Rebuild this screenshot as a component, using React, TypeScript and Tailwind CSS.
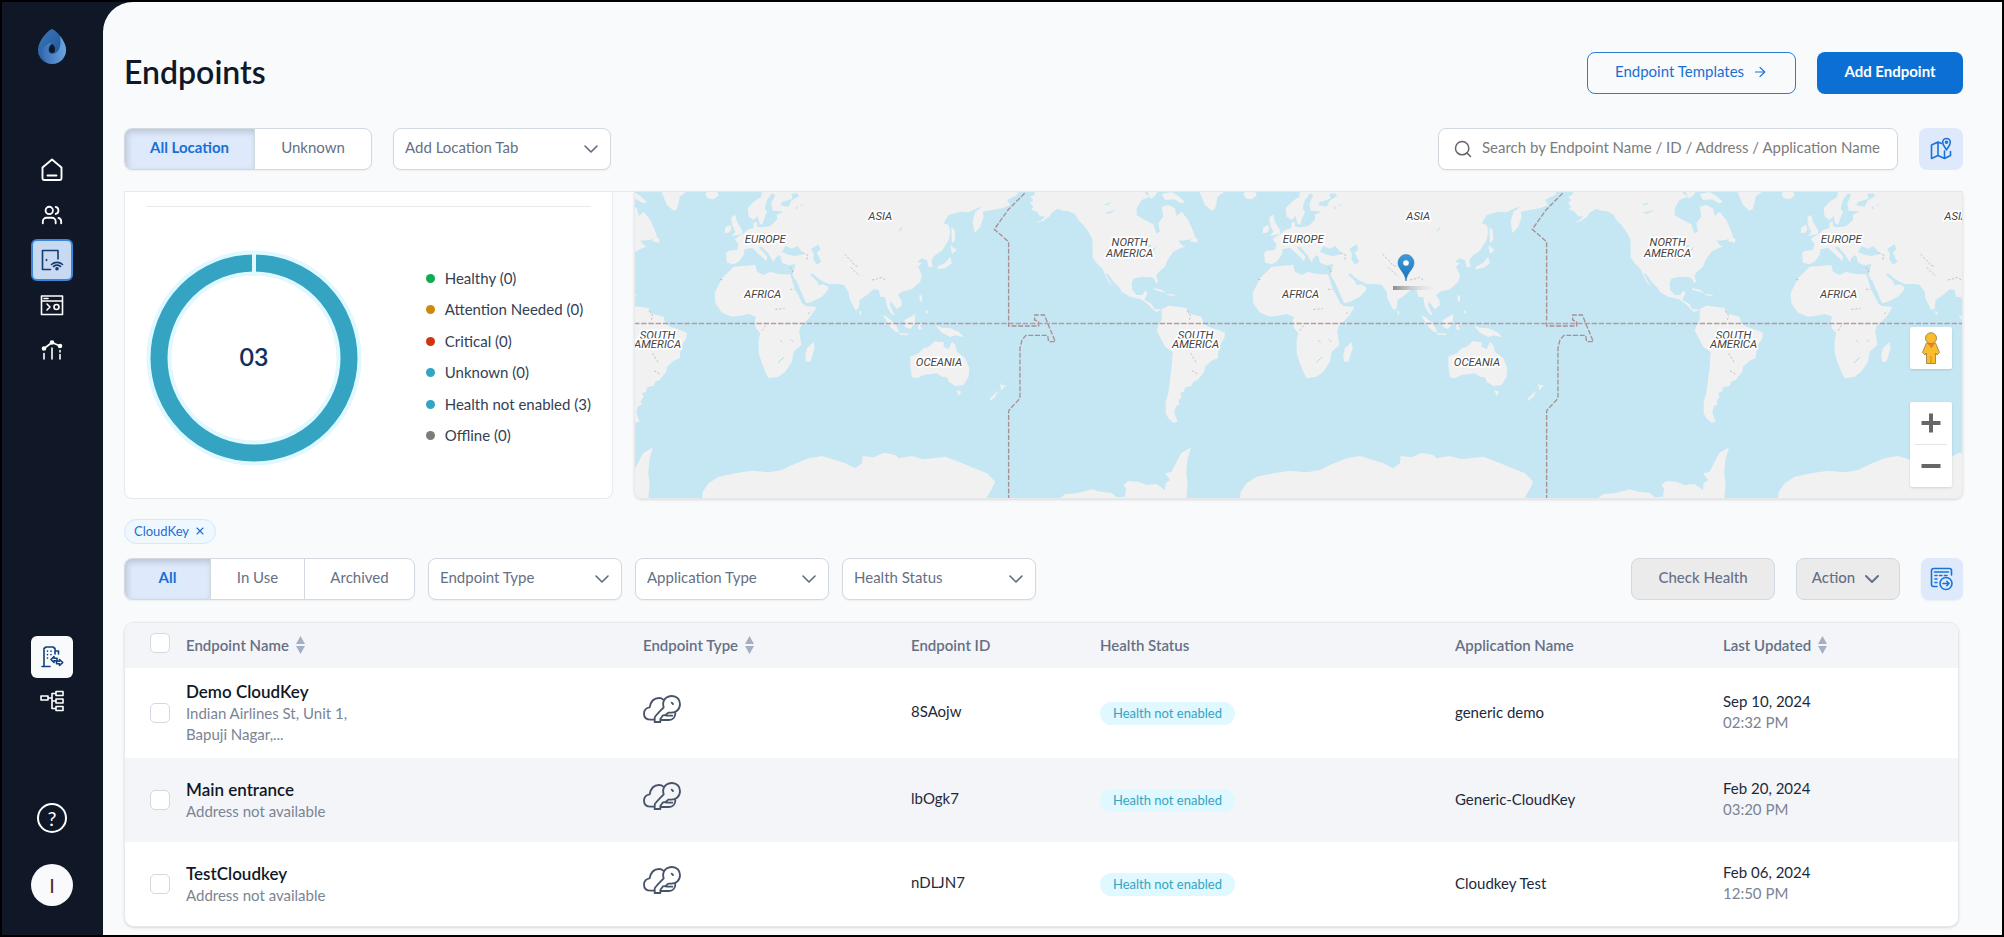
import type { ReactNode } from "react";
import { ArrowRight, ChevronDown, Search, Users, X } from "lucide-react";

const healthStats = [
  { label: "Healthy", count: 0, dot: "bg-[#0cad52]" },
  { label: "Attention Needed", count: 0, dot: "bg-[#cd8a0a]" },
  { label: "Critical", count: 0, dot: "bg-[#d1350d]" },
  { label: "Unknown", count: 0, dot: "bg-[#35a4c2]" },
  { label: "Health not enabled", count: 3, dot: "bg-[#35a4c2]" },
  { label: "Offline", count: 0, dot: "bg-[#7c7c7c]" },
];

const endpoints = [
  {
    name: "Demo CloudKey",
    address: "Indian Airlines St, Unit 1, Bapuji Nagar,...",
    id: "8SAojw",
    health: "Health not enabled",
    application: "generic demo",
    date: "Sep 10, 2024",
    time: "02:32 PM",
  },
  {
    name: "Main entrance",
    address: "Address not available",
    id: "lbOgk7",
    health: "Health not enabled",
    application: "Generic-CloudKey",
    date: "Feb 20, 2024",
    time: "03:20 PM",
  },
  {
    name: "TestCloudkey",
    address: "Address not available",
    id: "nDLJN7",
    health: "Health not enabled",
    application: "Cloudkey Test",
    date: "Feb 06, 2024",
    time: "12:50 PM",
  },
];

const columns = [
  { label: "Endpoint Name", sortable: true },
  { label: "Endpoint Type", sortable: true },
  { label: "Endpoint ID", sortable: false },
  { label: "Health Status", sortable: false },
  { label: "Application Name", sortable: false },
  { label: "Last Updated", sortable: true },
];

// Map shapes, one copy of the world
const americas = [
  "M40 35L38 45 25 50 35 60 25 70 35 80 28 88 45 95 55 108 70 110 60 120 42 130 65 122 85 108 90 98 108 87 125 92 140 93 160 103 172 122 185 135 200 155 212 178 213 215 212 230 225 250 243 268 250 285 262 308 275 320 265 305 255 288 250 278 262 285 278 308 295 325 300 335 325 350 345 355 358 358 378 372 390 385 403 396 420 390 412 388 398 388 390 372 380 366 368 360 372 350 378 338 370 332 362 345 345 345 332 330 330 310 335 296 360 290 390 292 398 298 403 310 410 305 404 288 412 275 430 260 438 240 455 215 475 205 490 200 480 195 470 182 500 180 520 168 515 155 500 120 480 95 465 108 460 85 440 75 420 80 425 110 410 130 415 155 404 160 395 133 370 120 345 105 345 85 360 60 385 50 370 40 370 35Z",
  "M512 165L528 178 526 188 505 184Z",
  "M378 35H408L400 48 386 56Z",
  "M420 42L450 36 470 48 490 66 478 70 458 58 430 60Z",
  "M533 35L550 75 570 92 580 86 585 66 588 50 608 35Z",
  "M665 42L672 55 690 58 706 46 700 36H670Z",
  "M397 324L420 329 433 339 418 335 398 329Z",
  "M436 341L460 344 458 348 438 346Z",
  "M420 388L440 377 480 382 495 385 500 400 540 410 545 430 560 440 590 450 610 458 608 475 592 500 588 535 570 542 550 560 548 575 528 600 515 605 510 618 490 622 487 635 475 640 480 650 470 665 475 672 462 680 458 700 468 725 455 728 440 715 432 700 432 665 440 640 445 600 450 560 453 515 430 500 415 470 405 452 412 432 420 420Z",
  "M115 955L130 942 165 940 210 928 235 935 270 938 285 952 310 950 313 925 305 915 320 903 350 905 375 915 405 912 430 930 432 910 445 900 430 880 450 875 455 865 478 820 508 802 497 840 494 880 498 915 494 955Z",
];

const oldWorld = [
  "M600 35L598 50 575 65 557 85 560 110 575 120 587 108 592 130 600 135 607 115 615 95 608 85 615 60 630 40 640 45 628 70 632 92 650 93 664 96 644 104 646 118 636 128 625 138 600 142 586 140 584 124 575 128 574 144 555 150 545 160 525 172 518 178 530 192 525 210 500 212 492 220 495 248 515 253 530 245 545 225 548 208 570 203 590 222 606 236 612 244 616 230 600 212 590 202 600 200 620 222 635 247 640 235 650 225 656 230 660 248 680 256 700 252 695 275 690 283 700 300 715 335 732 370 750 365 780 350 798 330 800 322 785 313 770 316 765 303 745 285 750 280 775 300 800 312 830 312 845 315 860 335 862 355 880 390 890 386 893 360 915 345 935 328 950 330 955 350 970 352 975 380 990 404 998 405 984 376 986 364 1005 388 1020 375 1018 360 1008 345 1020 335 1050 328 1075 305 1080 285 1068 260 1080 250 1065 245 1080 235 1095 240 1100 262 1112 260 1108 240 1120 225 1140 212 1160 180 1165 155 1160 135 1145 130 1160 105 1195 95 1220 97 1245 85 1262 80 1240 95 1232 125 1238 160 1255 140 1265 110 1262 95 1290 90 1320 85 1345 75 1335 60 1365 45 1370 35Z",
  "M508 112L520 104 525 125 540 150 540 162 510 168 520 155 510 135Z",
  "M490 142L505 134 508 150 500 158 488 160Z",
  "M515 260L580 255 585 275 605 285 625 275 640 280 660 283 685 283 690 300 700 330 715 355 730 378 760 380 762 385 745 410 715 440 712 455 718 495 695 515 690 545 670 575 650 590 620 595 612 580 600 550 590 520 590 480 595 460 582 445 578 425 582 410 560 402 530 408 510 410 480 398 460 370 458 340 465 325 480 295 500 275Z",
  "M755 486L758 505 745 545 732 545 730 525 735 505Z",
  "M893 390L899 398 896 404 892 400Z",
  "M962 405L975 410 1000 432 1012 455 1003 457 986 442Z",
  "M1008 458L1040 461 1038 466 1015 464Z",
  "M1028 420L1060 402 1058 430 1045 448 1028 440Z",
  "M1068 432L1088 430 1074 436 1080 448 1070 450Z",
  "M1073 345L1081 347 1079 367 1073 362ZM1090 388L1100 397 1094 402Z",
  "M1120 435L1140 443 1165 445 1190 455 1208 472 1180 466 1165 471 1140 458Z",
  "M1045 530L1070 520 1085 505 1100 500 1120 482 1128 486 1145 485 1145 500 1160 508 1170 485 1180 495 1185 515 1210 535 1222 565 1220 590 1205 615 1180 618 1160 605 1155 592 1140 590 1125 580 1085 585 1065 595 1050 592 1045 560Z",
  "M1183 630L1198 635 1190 648Z",
  "M1313 606L1320 616 1332 615 1318 632ZM1310 630L1300 650 1285 663 1283 656Z",
  "M1168 140L1178 150 1180 180 1170 190Z",
  "M1165 195L1184 210 1170 222Z",
  "M1165 230L1170 250 1150 264 1125 268 1128 260 1150 248Z",
  "M420 955L422 935 440 910 470 890 520 880 570 872 620 877 660 870 690 855 740 835 780 828 820 840 850 850 880 865 900 850 902 828 935 832 965 818 1000 825 1010 835 1050 828 1085 838 1150 830 1190 845 1230 862 1275 880 1300 905 1285 935 1275 950 1278 955Z",
];

const seas = [
  "M660 216L670 198 690 206 706 198 726 222 700 228 680 224Z",
  "M748 206L770 193 775 208 764 218 778 245 765 254 754 238 756 222Z",
  "M655 76L680 80 688 62 712 48 705 40 688 42 692 56 660 66Z",
  "M700 84L706 78 708 88ZM716 72L724 76 718 78Z",
  "M694 302L702 300 728 360 734 376 722 372 706 340Z",
  "M1008 154L1022 138 1016 152Z",
];

const northLakes = [
  "M248 98L285 90 262 102ZM246 74L270 66 258 76Z",
  "M375 192L388 196 392 206 404 200 396 214 386 210Z",
];

const borders =
  "M848 222L856 232 866 240 878 256 892 260M866 262L880 276 894 288M930 300L948 296 958 292 970 300M722 218L738 226 734 240M684 262L692 270 690 284M262 392L272 408 268 420M600 452L614 432M474 298L486 300M684 328L698 328M640 388L668 386M738 402L748 394M272 520L290 550M276 572L296 584";

const regionLabels = [
  { text: "NORTH", x: 89, y: 198 },
  { text: "AMERICA", x: 89, y: 230 },
  { text: "SOUTH", x: 287, y: 476 },
  { text: "AMERICA", x: 287, y: 504 },
  { text: "EUROPE", x: 610, y: 189 },
  { text: "AFRICA", x: 602, y: 353 },
  { text: "ASIA", x: 955, y: 120 },
  { text: "OCEANIA", x: 1131, y: 558 },
];

const MAP_WIDTH = 1329;

const WorldCopy = ({ offset }: { offset: number }) => (
  <g transform={`translate(${offset} -12) scale(0.3333)`}>
    <g transform="translate(-235 0)">
      {americas.map((d) => (
        <path key={d} d={d} fill="#f1f1f1" />
      ))}
      {northLakes.map((d) => (
        <path key={d} d={d} fill="#c5e6f3" />
      ))}
    </g>
    {oldWorld.map((d) => (
      <path key={d} d={d} fill="#f1f1f1" />
    ))}
    {seas.map((d) => (
      <path key={d} d={d} fill="#c5e6f3" />
    ))}
    <path d="M648 548L666 532M654 480L662 488M686 478L694 486" stroke="#b9d9e2" strokeWidth="3" />
    <path d={borders} fill="none" stroke="#b5a7a9" strokeWidth="2" strokeDasharray="7 5" />
    <path
      d="M1388 40L1338 90 1297 148 1340 185V438H1430V425L1418 420V405H1447L1480 485H1460L1457 466H1392L1380 480 1374 505V655L1340 692V955"
      fill="none"
      stroke="#a98f92"
      strokeWidth="4"
      strokeDasharray="15 5"
    />
    <g
      fill="#444448"
      stroke="#fff"
      strokeWidth="10"
      strokeLinejoin="round"
      paintOrder="stroke"
      fontFamily="Roboto, sans-serif"
      fontStyle="italic"
      fontSize="34"
      textAnchor="middle"
    >
      {/* only the labels that fall inside the map */}
      {regionLabels
        .filter(({ x }) => offset + x / 3 > 0 && offset + x / 3 < MAP_WIDTH)
        .map(({ text, x, y }) => (
          <text key={`${text}-${y}`} x={x} y={y}>{text}</text>
        ))}
    </g>
  </g>
);

const WorldMap = () => (
  <svg viewBox="0 0 1329 306" preserveAspectRatio="xMidYMid slice" className="block h-full w-full" role="img" aria-label="Endpoint map">
    <defs>
      <linearGradient id="pin" x1="0" y1="0" x2="0" y2="1">
        <stop offset="0" stopColor="#3f9bdc" />
        <stop offset="1" stopColor="#1a6fb8" />
      </linearGradient>
      <linearGradient id="pinShadow">
        <stop offset="0" stopColor="#8e8e8e" />
        <stop offset="1" stopColor="#e4e4e4" stopOpacity="0" />
      </linearGradient>
    </defs>
    <rect width="1329" height="306" fill="#c5e6f3" />
    {[-72, 466, 1004].map((offset) => (
      <WorldCopy key={offset} offset={offset} />
    ))}
    <path d="M0 131.5H1329" stroke="#b99b9e" strokeWidth="1.4" strokeDasharray="5.4 1.8" />
    <rect x="759" y="94" width="44" height="4" fill="url(#pinShadow)" />
    <path d="M772 89C771 80 764 77 764 71A8 8.5 0 0 1 780 71C780 77 773 80 772 89Z" fill="url(#pin)" stroke="#2a78b8" strokeWidth="0.6" />
    <circle cx="772" cy="71" r="2.8" fill="#fff" />
  </svg>
);

const Logo = () => (
  <svg viewBox="0 0 28 35" className="h-[35px] w-7">
    <defs>
      <linearGradient id="dropDark" x1="0" y1="0" x2="1" y2="1">
        <stop offset="0" stopColor="#3d78bd" />
        <stop offset="1" stopColor="#174f8c" />
      </linearGradient>
      <linearGradient id="dropLight" x1="0" y1="0.5" x2="1" y2="0.4">
        <stop offset="0" stopColor="#3a6cb8" />
        <stop offset="1" stopColor="#6aa7de" />
      </linearGradient>
    </defs>
    <path d="M14 0C19 2 28 12 28 21A14 14 0 0 1 0 21C0 12 9 2 14 0Z" fill="url(#dropDark)" />
    <path d="M22 7C26 12 28 17 28 21A14 14 0 0 1 14 35C8 35 4 30 4 25C4 18 9 14 14 14C9 18 9 24 14 25C20 25 24 18 22 7Z" fill="url(#dropLight)" />
    <path d="M14 15C16 16 17 18 17 20.500A3 3.500 0 0 1 11 20.500C11 18 12 16 14 15Z" fill="#101828" />
  </svg>
);

type IconProps = { children: ReactNode; className: string };

const LineIcon = ({ children, className }: IconProps) => (
  <svg viewBox="0 0 24 24" fill="none" stroke="currentColor" strokeWidth="1.6" strokeLinecap="round" strokeLinejoin="round" className={className}>
    {children}
  </svg>
);

const HomeIcon = () => (
  <LineIcon className="size-6">
    <path d="M2.500 9.500 12 1.500 21.500 9.500V20.500A1.500 1.500 0 0 1 20 22H4A1.500 1.500 0 0 1 2.500 20.500ZM7.500 17.500H16.500" strokeWidth="1.9" />
  </LineIcon>
);

const DoorIcon = () => (
  <LineIcon className="size-6">
    <path d="M18 11V2.500H2.500V21.500H10.500M6.500 11.500V12.500M11.500 16.500C14.500 13.700 19.500 13.700 22.500 16.500M13.500 18.500C15.500 17 18.500 17 20.500 18.500" />
    <circle cx="17" cy="20.800" r="1" fill="currentColor" />
  </LineIcon>
);

const ConsoleIcon = () => (
  <LineIcon className="size-6">
    <path d="M1.500 3H22.500V21.500H1.500ZM1.500 8H22.500M4 5.500H8M7 11 10 14 7 17" />
    <circle cx="16.500" cy="14" r="2.500" />
  </LineIcon>
);

const AnalyticsIcon = () => (
  <LineIcon className="size-6">
    <path d="M4 10.500 12 4.500 20 8M4 15.500V21M12 10V21M20 12.500V14M20 16.500V21" />
    <circle cx="4" cy="10.500" r="1.500" fill="currentColor" />
    <circle cx="12" cy="4.500" r="1.500" fill="currentColor" />
    <circle cx="20" cy="8" r="1.500" fill="currentColor" />
  </LineIcon>
);

const BuildingIcon = () => (
  <LineIcon className="size-6">
    <path d="M2 21.500H10M4 21.500V3.500L6 2H13L15 3.500V9M15 6H18.500V9M7.500 6V6.200M11 6V6.200M7.500 9.500V9.700M11 9.500V9.700M7.500 13V13.200" />
    <path d="M14 11.500 11 14.500 14 17.500V15.800H17V13.200H14ZM19.500 14.500 22.800 17.500 19.500 20.500V18.800H16.500V16.300H19.500Z" />
  </LineIcon>
);

const TreeIcon = () => (
  <LineIcon className="size-6">
    <path d="M1 7H8V11H1ZM16 2.500H23V6.500H16ZM16 10H23V14H16ZM16 17.500H23V21.500H16ZM8 9H12M16 4.500H12V19.500H16M12 12H16" />
  </LineIcon>
);

const MapToggleIcon = () => (
  <LineIcon className="size-6">
    <path d="M12.500 6.500 9 5 2.500 8V21.500L9 18.500 15.500 21.500 21.500 18.500V14.500M9 5V18.500M15.500 14V21.500" />
    <path d="M17.500 13C16 10 13.700 8.500 13.700 5.300A3.800 3.800 0 0 1 21.300 5.300C21.300 8.500 19 10 17.500 13Z" />
    <circle cx="17.500" cy="5.300" r="1" />
  </LineIcon>
);

const ExportIcon = () => (
  <LineIcon className="size-6">
    <path d="M7 19.500H3.500A2 2 0 0 1 1.500 17.500V3.500A2 2 0 0 1 3.500 1.500H19.500A2 2 0 0 1 21.500 3.500V8M4.500 5H18.500M5 8.500H7M9.500 8.500H12M14.500 8.500H17M5 12H7M5 15.500H7" />
    <circle cx="16" cy="16.500" r="6" />
    <path d="M13 16.500H19M16.800 14.300 19 16.500 16.800 18.700" />
  </LineIcon>
);

const KeyIcon = () => (
  <svg viewBox="0 0 114 84" fill="none" stroke="#475467" strokeWidth="5.5" strokeLinecap="round" strokeLinejoin="round" className="h-7 w-[38px]">
    <path d="M34 74H24C11 74 3 67 3 56C3 45 11 38 20 37C23 20 33 9 48 9C54 9 58 11 61 14" />
    <path d="M62 37C56 17 69 3 87 3C101 3 111 13 111 27C111 43 99 54 83 53H76L68 60 60 61 52 72V81H35V68C35 65 48 52 62 37Z" />
    <path d="M54 75H78C90 75 97 66 97 54M70 62H88" />
    <path d="M86 23 90 27" />
  </svg>
);

const Pegman = () => (
  <svg viewBox="0 0 18 32" className="h-8 w-[18px]">
    <path d="M4.500 11H13.500L17.500 20.500 15 23 13.500 21V31.500H4.500V21L3 23 .500 20.500Z" fill="#fbbc2c" stroke="#9a8455" strokeWidth="0.900" />
    <path d="M9 24V31" stroke="#c58a18" />
    <path d="M5 11H13L9.500 16.500Z" fill="#e8832a" />
    <circle cx="9" cy="6.200" r="5.500" fill="#fbbc2c" stroke="#9a8455" strokeWidth="0.900" />
  </svg>
);

const SortIcon = () => (
  <svg viewBox="0 0 9 18" className="h-[18px] w-[9px]" fill="#a5afc3">
    <path d="M4.500 0 9 8H0ZM0 10H9L4.500 18Z" />
  </svg>
);

const Donut = () => (
  <div className="grid size-[216px] place-items-center">
    <svg viewBox="0 0 216 216" className="col-start-1 row-start-1 size-full">
      <circle cx="108" cy="108" r="95" fill="none" stroke="#e0f8ff" strokeWidth="25" />
      <circle cx="108" cy="108" r="95" fill="none" stroke="#35a4c2" strokeWidth="17" />
      <path d="M108 2V26" stroke="#e0f8ff" strokeWidth="4" />
    </svg>
    <span className="col-start-1 row-start-1 pb-1 text-[25px] leading-8 font-semibold text-[#12305c]">03</span>
  </div>
);

const navLink = "flex size-[42px] items-center justify-center rounded-md";

const Sidebar = () => (
  <aside className="flex w-[101px] shrink-0 flex-col items-center bg-[#101828] pr-px text-white">
    <a href="#" aria-label="Dashboard" className="mt-[27px]"><Logo /></a>
    <nav className="mt-[85px] flex flex-col items-center gap-[3px]">
      <a href="#" aria-label="Home" className={navLink}><HomeIcon /></a>
      <a href="#" aria-label="Users" className={navLink}><Users className="size-[22px]" strokeWidth={2} /></a>
      <a href="#" aria-label="Endpoints" className="flex size-[42px] items-center justify-center rounded-md border-2 border-[#3d86dd] bg-[#c8d9f2] text-[#173b6c]"><DoorIcon /></a>
      <a href="#" aria-label="Console" className={navLink}><ConsoleIcon /></a>
      <a href="#" aria-label="Analytics" className={navLink}><AnalyticsIcon /></a>
    </nav>
    <div className="mt-auto flex flex-col items-center gap-[5px]">
      <a href="#" aria-label="Switch organization" className="flex size-[42px] items-center justify-center rounded-md bg-[#f9fafc] text-[#12407a]"><BuildingIcon /></a>
      <a href="#" aria-label="Hierarchy" className="flex h-9 w-[42px] items-center justify-center"><TreeIcon /></a>
    </div>
    <button aria-label="Help" className="mt-[84px] flex size-[30px] items-center justify-center rounded-full border-2 border-white text-[20px] leading-5">?</button>
    <button aria-label="Account" className="mt-[31px] mb-[29px] flex size-[42px] items-center justify-center rounded-full bg-[#f9fafc] text-[20px] text-[#53301f]">I</button>
  </aside>
);

const SelectBox = ({ label, className }: { label: string; className: string }) => (
  <div className={`relative ${className}`}>
    <select
      aria-label={label}
      className="h-[42px] w-full appearance-none rounded-lg border border-[#d3d9e1] bg-white pr-9 pb-[3px] pl-[11px] text-[15px] text-[#667085] shadow-xs"
    >
      <option>{label}</option>
    </select>
    <ChevronDown className="pointer-events-none absolute top-[9px] right-2 size-6 text-[#5d6b82]" strokeWidth={1.6} />
  </div>
);

const activeTab = "bg-[#deeafb] font-bold text-[#1a6fd4] shadow-[inset_2px_3px_6px_rgba(16,24,40,0.18)]";
const tabGroup = "flex h-[42px] overflow-hidden rounded-lg border border-[#d3d9e1] bg-white text-[15px] text-[#667085] shadow-xs";
const checkbox = "block size-5 appearance-none rounded-[5px] border border-[#d3d9e1] bg-white checked:bg-[#0b6fd3]";

const App = () => {
  return (
    <div className="flex min-h-screen border-2 border-black bg-[#101828] font-['Lato',sans-serif] text-[15px] leading-[21px] text-[#1d2939]">
      <Sidebar />

      <main className="min-w-0 flex-1 rounded-tl-[30px] bg-[#f9fafc] pr-[39px] pb-2 pl-[21px]">
        <header className="flex items-center justify-between pt-[50px]">
          <h1 className="pb-[2px] text-[32px] leading-9 font-semibold text-[#101828]">Endpoints</h1>
          <div className="flex gap-[21px]">
            <button className="flex h-[42px] w-[209px] items-center justify-center gap-2 rounded-lg border border-[#2b7cd3] pb-[3px] text-[#1a6fd4]">
              Endpoint Templates
              <ArrowRight className="size-4" strokeWidth={1.8} />
            </button>
            <button className="h-[42px] w-[146px] rounded-lg bg-[#0b6fd3] pb-[3px] font-bold text-white">Add Endpoint</button>
          </div>
        </header>

        {/* Location tabs and search */}
        <div className="mt-[34px] flex items-center">
          <div className={tabGroup}>
            <button className={`w-[129px] pb-[3px] ${activeTab}`}>All Location</button>
            <button className="w-[117px] border-l border-[#d3d9e1] pb-[3px]">Unknown</button>
          </div>
          <SelectBox label="Add Location Tab" className="ml-[21px] w-[218px]" />
          <div className="ml-auto flex h-[42px] w-[460px] items-center gap-[9px] rounded-lg border border-[#d3d9e1] bg-white px-[14px] shadow-xs">
            <Search className="size-5 shrink-0 text-[#666]" strokeWidth={1.8} />
            <input
              type="text"
              aria-label="Search endpoints"
              placeholder="Search by Endpoint Name / ID / Address / Application Name"
              className="w-full pb-[3px] outline-none placeholder:text-[#7c7c7c]"
            />
          </div>
          <button aria-label="Toggle map" className="ml-[21px] flex h-[42px] w-11 items-center justify-center rounded-lg bg-[#deeafb] text-[#1a73d9]">
            <MapToggleIcon />
          </button>
        </div>

        {/* Health summary and map */}
        <section className="mt-[21px] flex h-[308px] gap-[21px] border-t border-[#e7e9ed]">
          <div className="w-[489px] shrink-0 rounded-b-lg border border-t-0 border-[#e7e9ed] bg-white px-[21px]">
            <hr className="mt-[14px] border-[#e7e9ed]" />
            <div className="flex items-center justify-between pt-[43px]">
              <Donut />
              <ul className="mb-[2px] flex h-[178px] flex-col justify-between text-[#344054]">
                {healthStats.map((stat) => (
                  <li key={stat.label} className="flex items-center gap-[10px]">
                    <span className={`size-[9px] rounded-full ${stat.dot}`} />
                    {stat.label} ({stat.count})
                  </li>
                ))}
              </ul>
            </div>
          </div>

          <div className="relative min-w-0 flex-1 overflow-hidden rounded-b-lg border border-t-0 border-[#e7e9ed] shadow-sm">
            <WorldMap />
            <button aria-label="Street view" className="absolute right-[10px] bottom-[129px] flex size-[42px] items-center justify-center rounded-xs bg-white shadow">
              <Pegman />
            </button>
            <div className="absolute right-[10px] bottom-[11px] flex w-[42px] flex-col items-center rounded-xs bg-white shadow">
              <button aria-label="Zoom in" className="flex h-[42px] w-full items-center justify-center">
                <svg viewBox="0 0 20 20" className="size-5" stroke="#666" strokeWidth="4"><path d="M.500 10H19.500M10 .500V19.500" /></svg>
              </button>
              <span className="h-px w-8 bg-[#e6e6e6]" />
              <button aria-label="Zoom out" className="flex h-[42px] w-full items-center justify-center">
                <svg viewBox="0 0 20 20" className="size-5" stroke="#666" strokeWidth="4"><path d="M.500 10H19.500" /></svg>
              </button>
            </div>
          </div>
        </section>

        <div className="mt-5 flex">
          <button className="flex h-[25px] items-center gap-[5px] rounded-full border border-[#d5e7fb] bg-[#eff8ff] px-[9px] pb-px text-[13px] leading-4 text-[#1a6fd4]">
            CloudKey
            <X className="size-3" strokeWidth={2.2} />
          </button>
        </div>

        {/* Table filters */}
        <div className="mt-[14px] flex items-center">
          <div className={tabGroup}>
            <button className={`w-[85px] pb-[3px] ${activeTab}`}>All</button>
            <button className="w-[94px] border-l border-[#d3d9e1] pb-[3px]">In Use</button>
            <button className="w-[110px] border-l border-[#d3d9e1] pb-[3px]">Archived</button>
          </div>
          <div className="ml-[13px] flex gap-[13px]">
            <SelectBox label="Endpoint Type" className="w-[194px]" />
            <SelectBox label="Application Type" className="w-[194px]" />
            <SelectBox label="Health Status" className="w-[194px]" />
          </div>
          <div className="ml-auto flex gap-[21px]">
            <button className="h-[42px] w-[144px] rounded-lg border border-[#d3d9e1] bg-[#ecebec] pb-[3px] font-medium text-[#667085]">Check Health</button>
            <button className="flex h-[42px] w-[104px] items-center justify-center gap-[5px] rounded-lg border border-[#d3d9e1] bg-[#ecebec] pb-[3px] font-medium text-[#667085]">
              Action
              <ChevronDown className="mt-[3px] size-6" />
            </button>
            <button aria-label="Export table" className="flex size-[42px] items-center justify-center rounded-lg bg-[#deeafb] text-[#1a73d9] shadow-xs">
              <ExportIcon />
            </button>
          </div>
        </div>

        {/* Endpoint list */}
        <div className="mt-[22px] mr-1 overflow-hidden rounded-[10px] border border-[#e7e9ed] bg-white shadow-sm">
          <table className="w-full table-fixed text-left">
            <colgroup>
              <col className="w-[61px]" />
              <col className="w-[457px]" />
              <col className="w-[268px]" />
              <col className="w-[189px]" />
              <col className="w-[355px]" />
              <col className="w-[268px]" />
              <col className="w-[235px]" />
            </colgroup>
            <thead className="bg-[#f4f5f9] text-[#667085]">
              <tr className="h-[45px]">
                <th className="pb-[6px] pl-[25px]">
                  <input type="checkbox" aria-label="Select all endpoints" className={checkbox} />
                </th>
                {columns.map((column) => (
                  <th key={column.label} className="pb-px font-semibold">
                    {column.sortable ? (
                      <button className="flex items-center gap-[7px]">
                        {column.label}
                        <SortIcon />
                      </button>
                    ) : (
                      column.label
                    )}
                  </th>
                ))}
              </tr>
            </thead>
            <tbody>
              {endpoints.map((endpoint) => (
                <tr key={endpoint.id} className="h-[84px] even:bg-[#f4f5f9]">
                  <td className="pl-[25px]">
                    <input type="checkbox" aria-label={`Select ${endpoint.name}`} className={checkbox} />
                  </td>
                  <td className="py-[13px]">
                    <p className="text-[17px] leading-[22px] font-semibold text-[#101828]">{endpoint.name}</p>
                    <p className="w-[180px] text-[#7a8494]">{endpoint.address}</p>
                  </td>
                  <td className="pb-2"><KeyIcon /></td>
                  <td className="pb-1">{endpoint.id}</td>
                  <td>
                    <span className="inline-block rounded-full bg-[#e0f8ff] px-[13px] py-[3px] text-[13px] leading-[17px] text-[#35a4c2]">{endpoint.health}</span>
                  </td>
                  <td className="pb-[2px]">{endpoint.application}</td>
                  <td className="pb-[2px]">
                    <p>{endpoint.date}</p>
                    <p className="text-[#7a8494]">{endpoint.time}</p>
                  </td>
                </tr>
              ))}
            </tbody>
          </table>
        </div>
      </main>
    </div>
  );
};

export default App;
